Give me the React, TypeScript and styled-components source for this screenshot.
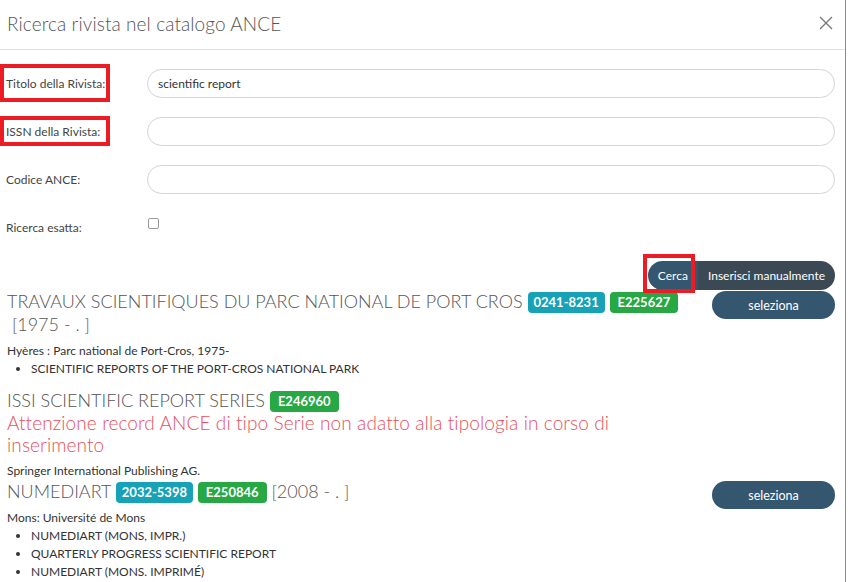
import React from 'react'
import styled, { createGlobalStyle } from 'styled-components'

const GlobalStyle = createGlobalStyle`
  html, body {
    margin: 0;
    padding: 0;
    background: #ffffff;
  }
  body {
    font-family: Lato, "Open Sans", sans-serif;
    color: #333;
  }
`

const Modal = styled.div`
  width: 845px;
  height: 582px;
  overflow: hidden;
  border-right: 1px solid #8a8a8a;
  background: #fff;
`

const Header = styled.div`
  height: 50px;
  border-bottom: 1px solid #dee2e6;
  display: flex;
  align-items: center;
  justify-content: space-between;
  padding: 0 12px 3px 7px;
  box-sizing: border-box;
`

const Title = styled.h4`
  margin: 0;
  font-family: Lato, sans-serif;
  font-weight: 300;
  font-size: 19px;
  color: #555;
  letter-spacing: 0.1px;
`

const CloseButton = styled.button`
  border: 0;
  background: none;
  padding: 0;
  width: 15px;
  height: 15px;
  display: flex;
  align-items: center;
  justify-content: center;
  cursor: pointer;
`

const Body = styled.div`
  padding: 19px 10px 0 6px;
`

const FormRow = styled.div`
  display: grid;
  grid-template-columns: 141px 1fr;
  margin-bottom: 19px;
`

const Label = styled.label<{ $mark?: 'tall' | 'short' }>`
  font-size: 12px;
  color: #444;
  height: 29px;
  white-space: nowrap;
  display: flex;
  align-items: center;
  justify-self: start;
  position: relative;
  ${p => p.$mark && `
    width: 98px;
    &::after {
      content: '';
      position: absolute;
      left: -6px;
      right: -6px;
      top: ${p.$mark === 'tall' ? '-5px' : '-1px'};
      bottom: ${p.$mark === 'tall' ? '-4px' : '0px'};
      border: 4px solid #ec1c24;
    }
  `}
`

const TextInput = styled.input`
  box-sizing: border-box;
  height: 29px;
  width: 100%;
  border: 1px solid #d4d4dc;
  border-radius: 15px;
  padding: 0 10px;
  font-family: Lato, sans-serif;
  font-size: 12px;
  color: #333;
  outline: none;
`

const Check = styled.input`
  margin: 5px 0 0 1px;
  width: 11px;
  height: 11px;
  align-self: start;
  appearance: none;
  border: 1px solid #9a9a9a;
  border-radius: 2px;
`

const Actions = styled.div`
  display: flex;
  justify-content: flex-end;
`

const Group = styled.div`
  display: flex;
`

const GroupButton = styled.button<{ $dark?: boolean; $marked?: boolean }>`
  height: 29px;
  border: 0;
  font-family: Lato, sans-serif;
  font-size: 12px;
  color: #fff;
  padding: 0 10px;
  background: ${p => (p.$dark ? '#3b4954' : '#34566f')};
  border-radius: ${p => (p.$dark ? '0 15px 15px 0' : '15px 0 0 15px')};
  position: relative;
  ${p => p.$marked && `
    &::after {
      content: '';
      position: absolute;
      top: -7px;
      bottom: -3px;
      left: -5px;
      right: 3px;
      border: 4px solid #ec1c24;
    }
  `}
`

const Result = styled.div`
  display: grid;
  grid-template-columns: 1fr 123px;
  column-gap: 16px;
  margin-left: 1px;
`

const ResultMain = styled.div``

const ResultTitle = styled.div`
  font-family: Lato, sans-serif;
  font-weight: 300;
  font-size: 18px;
  line-height: 23px;
  color: #555;
`

const Warning = styled.div`
  font-family: Lato, sans-serif;
  font-weight: 300;
  font-size: 19px;
  letter-spacing: 0.1px;
  line-height: 22px;
  color: #e8505b;
`

const Badge = styled.span<{ $kind: 'issn' | 'ance' }>`
  display: inline-block;
  font-family: Lato, sans-serif;
  font-weight: 700;
  font-size: 13px;
  line-height: 21px;
  padding: 0 ${p => (p.$kind === 'issn' ? '6px' : '8px')};
  border-radius: 4px;
  color: #fff;
  vertical-align: 1px;
  background: ${p => (p.$kind === 'issn' ? '#17a2b8' : '#28a745')};
`

const Publisher = styled.div`
  font-size: 12px;
  line-height: 18px;
  margin-top: 6px;
  color: #333;
`

const Variants = styled.ul`
  margin: 0 0 11px;
  padding-left: 24px;
  font-size: 12px;
  line-height: 18px;
  color: #333;
`

const SelectButton = styled.button`
  width: 123px;
  height: 28px;
  margin-top: 1px;
  border: 0;
  border-radius: 14px;
  background: #34566f;
  color: #fff;
  font-family: Lato, sans-serif;
  font-size: 12.5px;
  cursor: pointer;
`

const CloseIcon = () => (
  <svg width="14" height="14" viewBox="0 0 14 14">
    <path d="M1 1L13 13M13 1L1 13" stroke="#7a7a7a" strokeWidth="1.4" />
  </svg>
)

const App = () => {
  return (
    <>
      <GlobalStyle />
      <Modal>
        <Header>
          <Title>Ricerca rivista nel catalogo ANCE</Title>
          <CloseButton aria-label="chiudi">
            <CloseIcon />
          </CloseButton>
        </Header>
        <Body>
          <FormRow>
            <Label $mark="tall">Titolo della Rivista:</Label>
            <TextInput defaultValue="scientific report" />
          </FormRow>
          <FormRow>
            <Label $mark="short">ISSN della Rivista:</Label>
            <TextInput />
          </FormRow>
          <FormRow>
            <Label>Codice ANCE:</Label>
            <TextInput />
          </FormRow>
          <FormRow>
            <Label>Ricerca esatta:</Label>
            <Check type="checkbox" />
          </FormRow>
          <Actions>
            <Group>
              <GroupButton $marked>Cerca</GroupButton>
              <GroupButton $dark>Inserisci manualmente</GroupButton>
            </Group>
          </Actions>

          <Result>
            <ResultMain>
              <ResultTitle>
                TRAVAUX SCIENTIFIQUES DU PARC NATIONAL DE PORT CROS{' '}
                <Badge $kind="issn">0241-8231</Badge>{' '}
                <Badge $kind="ance">E225627</Badge>{' '}
                {'\u00a0'}[1975 - . ]
              </ResultTitle>
              <Publisher>Hyères : Parc national de Port-Cros, 1975-</Publisher>
              <Variants>
                <li>SCIENTIFIC REPORTS OF THE PORT-CROS NATIONAL PARK</li>
              </Variants>
            </ResultMain>
            <div>
              <SelectButton>seleziona</SelectButton>
            </div>
          </Result>

          <Result>
            <ResultMain>
              <ResultTitle>
                ISSI SCIENTIFIC REPORT SERIES <Badge $kind="ance">E246960</Badge>
              </ResultTitle>
              <Warning>
                Attenzione record ANCE di tipo Serie non adatto alla tipologia in corso di
                inserimento
              </Warning>
              <Publisher>Springer International Publishing AG.</Publisher>
            </ResultMain>
            <div />
          </Result>

          <Result>
            <ResultMain>
              <ResultTitle>
                NUMEDIART <Badge $kind="issn">2032-5398</Badge>{' '}
                <Badge $kind="ance">E250846</Badge> [2008 - . ]
              </ResultTitle>
              <Publisher>Mons: Université de Mons</Publisher>
              <Variants>
                <li>NUMEDIART (MONS, IMPR.)</li>
                <li>QUARTERLY PROGRESS SCIENTIFIC REPORT</li>
                <li>NUMEDIART (MONS. IMPRIMÉ)</li>
              </Variants>
            </ResultMain>
            <div>
              <SelectButton>seleziona</SelectButton>
            </div>
          </Result>
        </Body>
      </Modal>
    </>
  )
}

export default App
